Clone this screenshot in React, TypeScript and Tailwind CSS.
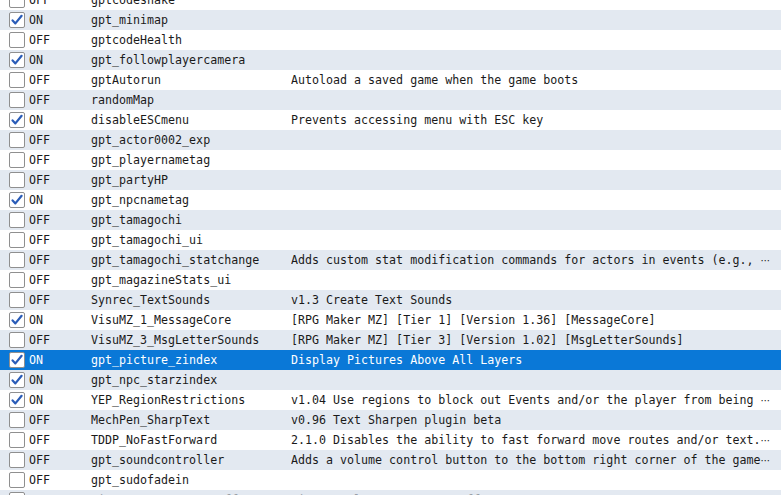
import React from 'react'

type Plugin = { on: boolean; name: string; desc: string; more?: string }

const plugins: Plugin[] = [
  { on: false, name: 'gptcodesnake', desc: '' },
  { on: true, name: 'gpt_minimap', desc: '' },
  { on: false, name: 'gptcodeHealth', desc: '' },
  { on: true, name: 'gpt_followplayercamera', desc: '' },
  { on: false, name: 'gptAutorun', desc: 'Autoload a saved game when the game boots' },
  { on: false, name: 'randomMap', desc: '' },
  { on: true, name: 'disableESCmenu', desc: 'Prevents accessing menu with ESC key' },
  { on: false, name: 'gpt_actor0002_exp', desc: '' },
  { on: false, name: 'gpt_playernametag', desc: '' },
  { on: false, name: 'gpt_partyHP', desc: '' },
  { on: true, name: 'gpt_npcnametag', desc: '' },
  { on: false, name: 'gpt_tamagochi', desc: '' },
  { on: false, name: 'gpt_tamagochi_ui', desc: '' },
  { on: false, name: 'gpt_tamagochi_statchange', desc: 'Adds custom stat modification commands for actors in events (e.g., ', more: '⋯' },
  { on: false, name: 'gpt_magazineStats_ui', desc: '' },
  { on: false, name: 'Synrec_TextSounds', desc: 'v1.3 Create Text Sounds' },
  { on: true, name: 'VisuMZ_1_MessageCore', desc: '[RPG Maker MZ] [Tier 1] [Version 1.36] [MessageCore]' },
  { on: false, name: 'VisuMZ_3_MsgLetterSounds', desc: '[RPG Maker MZ] [Tier 3] [Version 1.02] [MsgLetterSounds]' },
  { on: true, name: 'gpt_picture_zindex', desc: 'Display Pictures Above All Layers' },
  { on: true, name: 'gpt_npc_starzindex', desc: '' },
  { on: true, name: 'YEP_RegionRestrictions', desc: 'v1.04 Use regions to block out Events and/or the player from being ', more: '⋯' },
  { on: false, name: 'MechPen_SharpText', desc: 'v0.96 Text Sharpen plugin beta' },
  { on: false, name: 'TDDP_NoFastForward', desc: '2.1.0 Disables the ability to fast forward move routes and/or text.', more: '⋯' },
  { on: false, name: 'gpt_soundcontroller', desc: 'Adds a volume control button to the bottom right corner of the game', more: '⋯' },
  { on: false, name: 'gpt_sudofadein', desc: '' },
  { on: false, name: 'VisuMZ_4_EncounterEffects', desc: 'VisuMZ Helper Encounter Effects' },
]

const SELECTED = 18

function Check({ on }: { on: boolean }) {
  return (
    <div className="w-4 h-4 shrink-0 rounded-[2px] border border-[#8f8f8f] bg-white flex items-center justify-center">
      {on && (
        <svg width="12" height="12" viewBox="0 0 12 12">
          <path d="M1.6 6.4 L4.4 9.4 L10.6 1.8" fill="none" stroke="#2a5cb8" strokeWidth="2.2" strokeLinecap="round" strokeLinejoin="round" />
        </svg>
      )}
    </div>
  )
}

export default function App() {
  return (
    <div className="w-[781px] h-[495px] overflow-hidden bg-white" style={{ fontFamily: '"DejaVu Sans Mono", monospace' }}>
      <div className="-mt-[10px] text-[11.65px] leading-5">
        {plugins.map((p, i) => {
          const sel = i === SELECTED
          const last = i === plugins.length - 1
          const bg = sel ? 'bg-[#0a78d7] text-white' : i % 2 === 1 ? 'bg-[#e3e9f1] text-[#1a1a1a]' : 'bg-white text-[#1a1a1a]'
          return (
            <div key={p.name} className={`flex h-5 items-center whitespace-nowrap ${bg}`}>
              <div className="w-[91px] flex items-center pl-[9px] gap-[4px] shrink-0">
                <Check on={p.on} />
                <span className={last ? 'text-[#9aa0a8]' : ''}>{p.on ? 'ON' : 'OFF'}</span>
              </div>
              <div className={`w-[200px] shrink-0 ${last ? 'text-[#9aa0a8]' : ''}`}>{p.name}</div>
              <div className={`flex-1 overflow-hidden whitespace-pre ${last ? 'text-[#9aa0a8]' : ''}`}>
                {p.desc}
                {p.more && <span className="font-['DejaVu_Sans',sans-serif] text-[10px]">{p.more}</span>}
              </div>
            </div>
          )
        })}
      </div>
    </div>
  )
}
